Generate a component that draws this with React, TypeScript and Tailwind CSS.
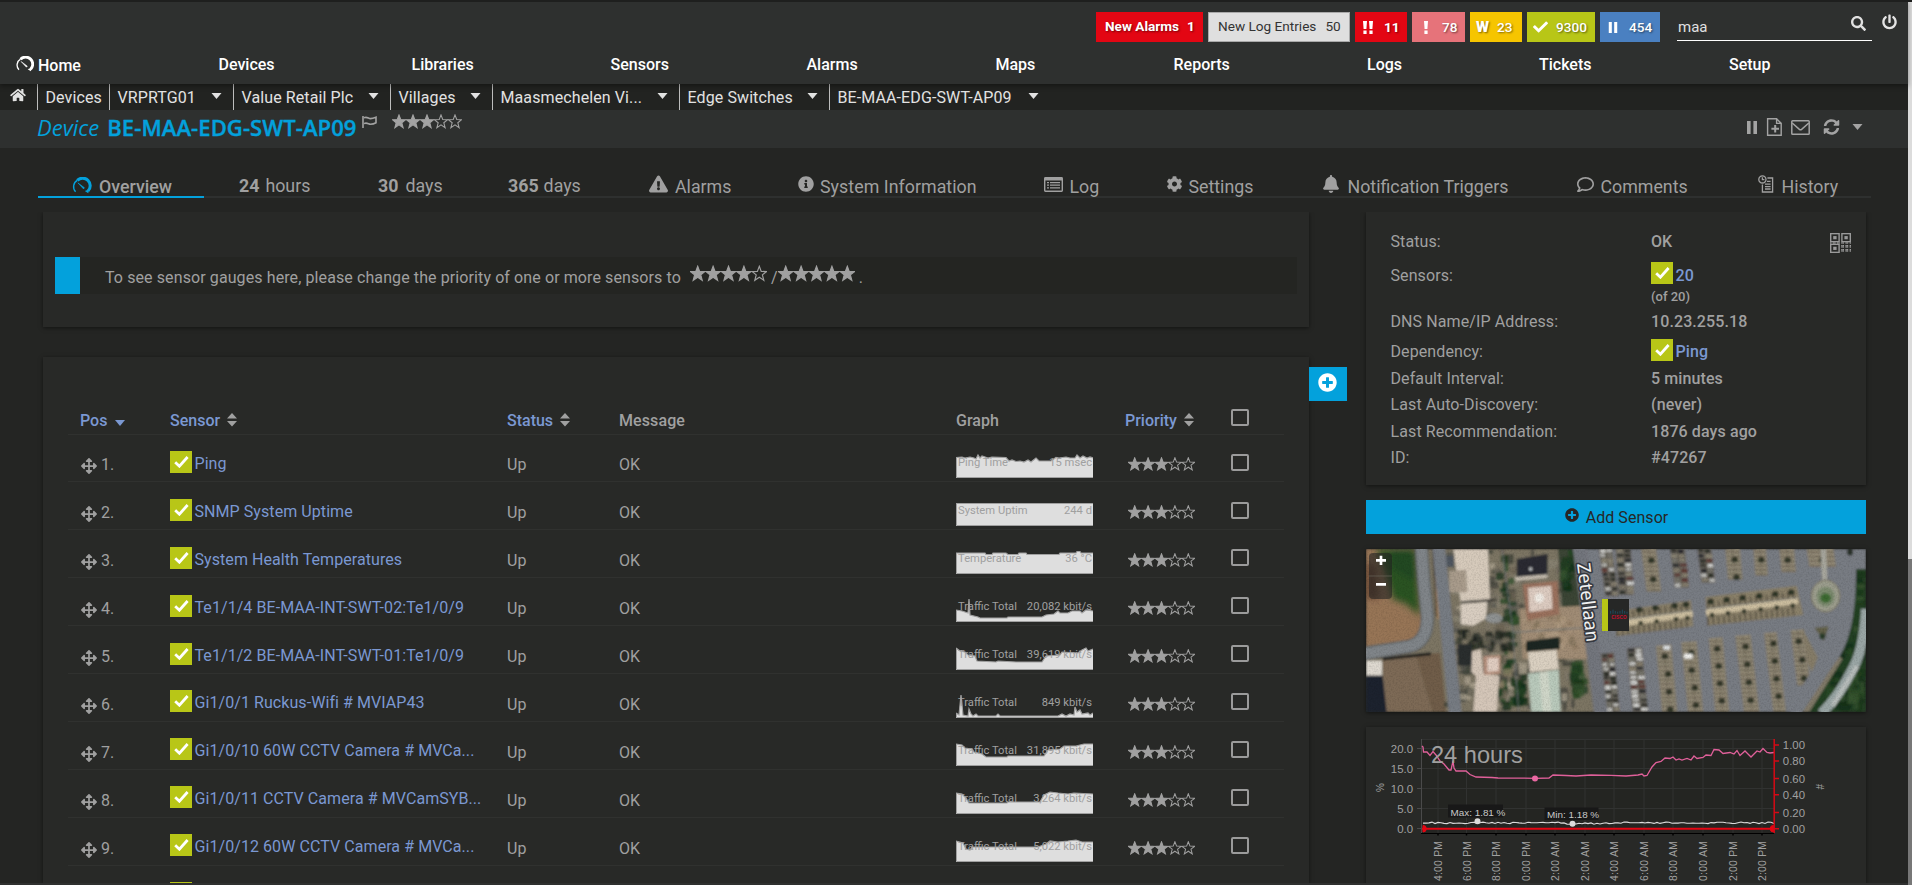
import React from "react";
import {
  FaBell,
  FaCheck,
  FaCog,
  FaExclamationTriangle,
  FaHome,
  FaInfoCircle,
  FaPlusCircle,
  FaPowerOff,
  FaRegComment,
  FaSearch,
  FaSyncAlt,
  FaArrowsAlt,
} from "react-icons/fa";

/* ---------- small drawings ---------- */

function Caret({ className }: { className?: string }) {
  return (
    <svg viewBox="0 0 10 6" className={className}>
      <path d="M0 0H10L5 6Z" fill="currentColor" />
    </svg>
  );
}

function Gauge({ className }: { className?: string }) {
  return (
    <svg viewBox="0 0 20 18" className={className}>
      <path d="M3.2 15.5A7.6 7.6 0 0 1 5 3.6" fill="none" stroke="currentColor" strokeWidth="1.5" />
      <path d="M5 3.6A7.8 7.8 0 0 1 16.4 14.8" fill="none" stroke="currentColor" strokeWidth="3.2" />
      <path d="M16.6 17.2L13 14.8L17.6 13Z" fill="currentColor" />
      <path d="M11.6 12.6L5.6 6.2L12.6 11.4Z" fill="currentColor" stroke="currentColor" strokeWidth="0.6" />
    </svg>
  );
}

const STAR = "M10 .6L12.5 7.2L19.4 7.5L14 11.8L15.9 18.8L10 14.8L4.100 18.8L6 11.8L.6 7.5L7.5 7.2Z";

function Stars({ filled, className }: { filled: number; className?: string }) {
  return (
    <svg viewBox="0 0 100 20" className={className}>
      {[0, 1, 2, 3, 4].map((i) => (
        <path
          key={i}
          d={STAR}
          transform={`translate(${i * 20} 0)`}
          fill={i < filled ? "currentColor" : "none"}
          stroke="currentColor"
          strokeWidth="1.5"
        />
      ))}
    </svg>
  );
}

function SortIcon() {
  return (
    <svg viewBox="0 0 10 14" className="mb-[3px] h-[14px] w-[10px] text-[#a0a0a0]">
      <path d="M5 0L10 5.5H0ZM0 8H10L5 13.5Z" fill="currentColor" />
    </svg>
  );
}

function Bars({ className }: { className?: string }) {
  return (
    <svg viewBox="0 0 10 13" className={className}>
      <path d="M0 0H3.6V13H0ZM6.4 0H10V13H6.4Z" fill="currentColor" />
    </svg>
  );
}

function FlagIcon({ className }: { className?: string }) {
  return (
    <svg viewBox="0 0 15 12" className={className} fill="none" stroke="currentColor" strokeWidth="1.6">
      <path d="M1 0V12" />
      <path d="M2 1.8C5 .4 6.5 2.6 8.4 2.6C10.4 2.6 12 2 14 1.2V6.8C11.8 8 10.4 8.2 8.4 8.2C6.5 8.2 5 6.2 2 7.6" />
    </svg>
  );
}

function LogIcon({ className }: { className?: string }) {
  return (
    <svg viewBox="0 0 19 15" className={className}>
      <path d="M.7 1.4V13.6Q.7 14.3 1.4 14.3H17.6Q18.3 14.3 18.3 13.6V1.4Q18.3.7 17.6.7H1.4Q.7.7.7 1.4Z" fill="none" stroke="currentColor" strokeWidth="1.4" />
      <path d="M1 1H18V3.4H1ZM3 5H5V6.2H3ZM6 5H16V6.2H6ZM3 7.6H5V8.8H3ZM6 7.6H16V8.8H6ZM3 10.2H5V11.4H3ZM6 10.2H16V11.4H6Z" fill="currentColor" />
    </svg>
  );
}

function HistoryIcon({ className }: { className?: string }) {
  return (
    <svg viewBox="0 0 16 18" className={className} fill="none" stroke="currentColor" strokeWidth="1.3">
      <circle cx="4.4" cy="4.4" r="3.6" />
      <path d="M4.4 2.2V4.6H6.4" />
      <path d="M9.4 3H14.6V17H4.4V9.6" />
      <path d="M9 6.4H12.6M7 9.2H12.6M7 11.6H12.6M7 14H12.6" />
    </svg>
  );
}

function DocPlus({ className }: { className?: string }) {
  return (
    <svg viewBox="0 0 17 18" className={className} fill="none" stroke="currentColor">
      <path d="M1.6.8H10.6L15.2 5.4V17.2H1.6ZM10.6.8V5.4H15.2" strokeWidth="1.4" />
      <path d="M9.2 7V14.6M5.4 10.8H13" strokeWidth="2" />
    </svg>
  );
}

function Mail({ className }: { className?: string }) {
  return (
    <svg viewBox="0 0 19 15" className={className} fill="none" stroke="currentColor" strokeWidth="1.5">
      <rect x=".8" y=".8" width="17.4" height="13.4" rx=".8" />
      <path d="M1.2 3L8.4 9.4Q9.5 10.3 10.6 9.4L17.8 3" />
    </svg>
  );
}

function CheckBadge({ className }: { className?: string }) {
  return (
    <span className={`flex h-[22px] w-[22px] shrink-0 items-center justify-center bg-[#b8c617] text-white ${className ?? ""}`}>
      <svg viewBox="0 0 15 12" className="h-3 w-[15px]">
        <path d="M1.2 6.2L5.4 10.2L13.6 1" fill="none" stroke="currentColor" strokeWidth="2.8" />
      </svg>
    </span>
  );
}

function QrIcon({ className }: { className?: string }) {
  const cells: React.ReactNode[] = [];
  for (let y = 0; y < 15; y++)
    for (let x = 0; x < 15; x++) {
      const finder = (x < 7 && y < 7) || (x > 7 && y < 7) || (x < 7 && y > 7);
      if (!finder && (x * 7 + y * 5 + x * y) % 3 !== 1)
        cells.push(<rect key={`${x}-${y}`} x={x} y={y} width="1" height="1" />);
    }
  return (
    <svg viewBox="0 0 15 15" preserveAspectRatio="none" className={className} fill="currentColor">
      {cells}
      {[[0, 0], [8, 0], [0, 8]].map(([x, y]) => (
        <g key={`${x}${y}`}>
          <rect x={x + 0.5} y={y + 0.5} width="6" height="6" fill="none" stroke="currentColor" />
          <rect x={x + 2.3} y={y + 2.3} width="2.4" height="2.4" />
        </g>
      ))}
    </svg>
  );
}

/* ---------- header ---------- */

const NAV: [string, string][] = [
  ["Devices", "w-[193px]"],
  ["Libraries", "w-[199px]"],
  ["Sensors", "w-[196px]"],
  ["Alarms", "w-[189px]"],
  ["Maps", "w-[178px]"],
  ["Reports", "w-[193.5px]"],
  ["Logs", "w-[172px]"],
  ["Tickets", "w-[190px]"],
  ["Setup", "w-[100px]"],
];

function Header() {
  const shadow = "[text-shadow:1px_1px_2px_rgba(0,0,0,0.5)]";
  return (
    <header className="relative z-10 h-[84px] border-t-2 border-[#1e1f1e] bg-[#2e302f] text-white shadow-[0_2px_5px_rgba(0,0,0,0.4)]">
      <div className="flex h-10 items-end justify-end gap-[5px] pr-[11px] text-[13.6px] leading-[30px]">
        <span className={`h-[30px] w-[107px] bg-[#e30613] pl-[9px] leading-[29px] font-bold ${shadow}`}>
          New Alarms<span className="ml-2">1</span>
        </span>
        <span className="h-[30px] w-[142px] border border-[#a9a9a9] bg-[#dfdfdf] pl-[9px] leading-[27px] text-[#333]">
          New Log Entries<span className="ml-[9px]">50</span>
        </span>
        <span className={`flex h-[30px] w-[52px] items-center bg-[#e30613] pl-[7px] leading-[29px] font-bold ${shadow}`}>
          <svg viewBox="0 0 12 13" className="mr-[10px] h-[13px] w-3" fill="currentColor">
            <path d="M1 0H5L4.4 8H1.6ZM1.4 9.6H4.6V13H1.4ZM7 0H11L10.4 8H7.6ZM7.4 9.6H10.6V13H7.4Z" />
          </svg>
          11
        </span>
        <span className={`flex h-[30px] w-[53px] items-center bg-[#e6737a] pl-[8px] font-medium ${shadow}`}>
          <svg viewBox="0 0 12 13" className="mr-[10px] h-[13px] w-3" fill="currentColor">
            <path d="M4 0H8L7.4 8H4.6ZM4.4 9.6H7.6V13H4.4Z" />
          </svg>
          78
        </span>
        <span className={`flex h-[30px] w-[52px] items-center bg-[#f6c500] pl-[6px] font-medium ${shadow}`}>
          <span className="mr-2 text-[15px] font-black">W</span>23
        </span>
        <span className={`flex h-[30px] w-[68px] items-center bg-[#b8c617] pl-[6px] font-medium ${shadow}`}>
          <FaCheck className="mr-[8px] h-4 w-[15px]" />
          9300
        </span>
        <span className={`flex h-[30px] w-[60px] items-center bg-[#4a80c1] pl-[8px] font-medium ${shadow}`}>
          <Bars className="mr-[11px] h-[11px] w-[10px]" />
          454
        </span>
        <label className="mb-[1px] ml-3 flex h-[30px] w-[195px] items-center justify-between border-b border-white pt-[2px] pr-[6px] pl-px text-[15px] text-[#e0e0e0]">
          maa
          <FaSearch className="mb-[6px] h-[15px] w-[15px]" />
        </label>
        <FaPowerOff className="mb-[12px] ml-[5px] h-4 w-[15px] text-[#e4e4e4]" />
      </div>
      <nav className="flex h-[44px] items-center pt-[2px] pl-[16px] text-[16px] font-medium">
        <span className="flex w-[202.5px] items-center pt-px">
          <Gauge className="mr-1 mb-1 h-4 w-[18px]" />
          Home
        </span>
        {NAV.map(([t, w]) => (
          <span key={t} className={`shrink-0 ${w}`}>{t}</span>
        ))}
      </nav>
    </header>
  );
}

const CRUMBS: [string, string, boolean][] = [
  ["Devices", "w-[72px]", false],
  ["VRPRTG01", "w-[124px]", true],
  ["Value Retail Plc", "w-[157px]", true],
  ["Villages", "w-[102px]", true],
  ["Maasmechelen Vi...", "w-[187px]", true],
  ["Edge Switches", "w-[150px]", true],
  ["BE-MAA-EDG-SWT-AP09", "w-[221px]", true],
];

function Breadcrumbs() {
  return (
    <div className="flex h-[26px] bg-[#222321] text-[16px] text-[#e2e2e2]">
      <div className="w-[37px] pt-[4px] pl-[10px]">
        <FaHome className="h-[14px] w-4" />
      </div>
      {CRUMBS.map(([t, w, caret]) => (
        <div key={t} className={`flex justify-between border-l border-[#bdbdbd] pt-[4px] pr-[11px] pl-[7.500px] leading-[20px] ${w}`}>
          <span className="tracking-[0.1px] whitespace-nowrap">{t}</span>
          {caret && <Caret className="mt-[5px] h-[6px] w-[11px]" />}
        </div>
      ))}
    </div>
  );
}

function TitleBar() {
  return (
    <div className="flex h-[38px] items-start bg-[#2e302f] pr-[45px] pl-[38px] text-[#a3a3a3]">
      <h1 className="pt-[2px] font-['Open_Sans'] text-[22px] leading-[30px] whitespace-nowrap text-[#03a1dc]">
        <span className="mr-2 -ml-px italic">Device</span>
        <span className="font-semibold tracking-[0.1px] [-webkit-text-stroke:0.4px_#03a1dc]">BE-MAA-EDG-SWT-AP09</span>
      </h1>
      <FlagIcon className="mt-[6px] ml-[5px] h-3 w-[15px]" />
      <Stars filled={3} className="mt-[4px] ml-[15px] h-[15px] w-[70px]" />
      <div className="ml-auto flex h-[34px] items-center">
        <Bars className="h-[13px] w-[10px]" />
        <DocPlus className="ml-[9px] h-[18px] w-[17px]" />
        <Mail className="ml-[8px] h-[15px] w-[19px]" />
        <FaSyncAlt className="ml-[13px] h-4 w-[17px]" />
        <Caret className="ml-[12px] h-[6px] w-[11px]" />
      </div>
    </div>
  );
}

function Tabs() {
  const item = "flex shrink-0 items-center whitespace-nowrap";
  return (
    <nav className="mx-[38px] mt-[28px] mr-[37px] flex h-[22px] border-b-2 border-[#2e302f] text-[17.8px] leading-[22px] text-[#a0a0a0]">
      <div className={`${item} h-[22px] w-[166px] border-b-2 border-[#03a1dc] pt-[1px] pl-[34px] font-medium`}>
        <Gauge className="mr-[7px] mb-[3px] h-[17px] w-5 text-[#03a1dc]" />
        Overview
      </div>
      <div className={`${item} w-[139.5px] pl-[35px]`}><b className="mr-[6px]">24</b> hours</div>
      <div className={`${item} w-[129.5px] pl-[34.5px]`}><b className="mr-[7px]">30</b> days</div>
      <div className={`${item} w-[138px] pl-[35px]`}><b className="mr-[5px]">365</b> days</div>
      <div className={`${item} w-[149px] pt-[2px] pl-[38px]`}>
        <FaExclamationTriangle className="mr-[7px] mb-[6px] h-[18px] w-[19px]" />Alarms
      </div>
      <div className={`${item} w-[283.5px] pt-[2px] pl-[38px]`}>
        <FaInfoCircle className="mr-[6px] mb-[6px] h-4 w-4" />
        <span className="tracking-[0.05px]">System Information</span>
      </div>
      <div className={`${item} w-[122px] pt-[2px]`}>
        <LogIcon className="mr-[7px] mb-[6px] h-[15px] w-[19px]" />Log
      </div>
      <div className={`${item} w-[156px] pt-[2px]`}>
        <FaCog className="mr-[6px] mb-[6px] h-4 w-[17px]" />Settings
      </div>
      <div className={`${item} w-[254px] pt-[2px]`}>
        <FaBell className="mr-[8px] mb-[6px] h-[18px] w-[18px]" />
        <span>Notification Triggers</span>
      </div>
      <div className={`${item} w-[182px] pt-[2px]`}>
        <FaRegComment className="mr-[6px] mb-[5px] h-[17px] w-[19px]" />Comments
      </div>
      <div className={`${item} pt-[2px]`}>
        <HistoryIcon className="mr-2 mb-[6px] h-[18px] w-4" />History
      </div>
    </nav>
  );
}

/* ---------- sensor table ---------- */

type Sensor = { name: string; label: string; value: string; line: string };

const SENSORS: Sensor[] = [
  { name: "Ping", label: "Ping Time", value: "15 msec", line: "0,5.500 6,5 9,6 14,5 18,6 20,7 22,3 24,6 26,4 32,6 36,5 50,5.500 53,9 56,8 60,9.500 64,9 68,10 72,8 75,10 80,6 83,9 86,9 95,9 100,5.500 103,6 110,5 114,6 119,6 121,3 124,6 127,4 131,6 134,5 137,6" },
  { name: "SNMP System Uptime", label: "System Uptim", value: "244 d", line: "0,3.500 137,3.500" },
  { name: "System Health Temperatures", label: "Temperature", value: "36 °C", line: "0,5 29,5 30,6.500 36,6.500 37,5 50,5 52,6.500 62,6.500 63,5 70,5 71,6.500 103,6.500 104,5 120,5 121,3.500 124,3.500 125,5 137,5" },
  { name: "Te1/1/4 BE-MAA-INT-SWT-02:Te1/0/9", label: "Traffic Total", value: "20,082 kbit/s", line: "0,14 6,15 12,17 13,3 14,19 22,21 24,22 51,22 52,21 86,21 90,19 98,18 102,15 104,17 112,17 116,15 124,15 126,17 130,14 137,15" },
  { name: "Te1/1/2 BE-MAA-INT-SWT-01:Te1/0/9", label: "Traffic Total", value: "39,619 kbit/s", line: "0,4 4,7 9,8 12,11 19,12 21,17 40,18 42,17 60,18 86,18 90,12 104,11 106,8 122,9 126,6 130,4 132,7 137,5" },
  { name: "Gi1/0/1 Ruckus-Wifi # MVIAP43", label: "Traffic Total", value: "849 kbit/s", line: "0,21 3,23 5,3 7,23 12,24 13,17 15,22 17,24 20,22 22,24 40,24 42,22 44,24 102,24 106,22 110,24 114,22 118,23 119,15 121,20 124,18 126,22 132,21 134,23 137,21" },
  { name: "Gi1/0/10 60W CCTV Camera # MVCa...", label: "Traffic Total", value: "31,895 kbit/s", line: "0,4 6,5 9,8 16,9 18,12 26,14 30,17 51,17 52,16 88,16 92,10 104,9 108,6 120,6 128,4 137,4" },
  { name: "Gi1/0/11 CCTV Camera # MVCamSYB...", label: "Traffic Total", value: "3,264 kbit/s", line: "0,5 6,6 10,10 13,15 51,15 52,14 84,14 88,7 94,4 102,5 112,6 118,5 137,6" },
  { name: "Gi1/0/12 60W CCTV Camera # MVCa...", label: "Traffic Total", value: "5,022 kbit/s", line: "0,5 7,7 10,13 14,14 16,11 82,11 90,8 94,5 102,6 112,5 120,4 126,6 137,6" },
];

const COLS = "grid grid-cols-[102px_337px_112px_337px_170px_105px_52px]";

function Sparkline({ s }: { s: Sensor }) {
  return (
    <svg viewBox="0 0 137 26" className="mb-[3px] h-[26px] w-[137px] overflow-hidden font-['Roboto']">
      <polygon points={`0,26 ${s.line} 137,26`} fill="#dedede" />
      <polyline points={s.line} fill="none" stroke="#a0a0a0" strokeWidth="1.2" />
      <path d={`M.5 ${s.line.split(" ")[0].split(",")[1]}V25.5H137`} fill="none" stroke="#a0a0a0" strokeWidth="1" />
      <text x="2" y="14" fontSize="11.2" fill="#a0a0a0">{s.label}</text>
      <text x="136" y="14" fontSize="11.2" textAnchor="end" fill="#a0a0a0">{s.value}</text>
    </svg>
  );
}

function Checkbox({ className }: { className?: string }) {
  return <span className={`block h-[17px] w-[18px] rounded-[2px] border-2 border-[#9b9b9b] ${className ?? ""}`} />;
}

function SensorTable() {
  return (
    <section className="mt-[30px] h-[526px] bg-[#282927] px-[25px] pt-[30px] shadow-[0_1px_4px_rgba(0,0,0,0.5)]">
      <div className={`${COLS} h-[48px] items-end border-b border-[#30312f] text-[16px] leading-5 font-medium text-[#7b98d2]`}>
        <span className="mb-[3px] flex items-center gap-2 pl-3">Pos<Caret className="mt-1 h-[6px] w-[10px]" /></span>
        <span className="mb-[3px] flex items-center gap-[7px]">Sensor<SortIcon /></span>
        <span className="mb-[3px] flex items-center gap-[7px]">Status<SortIcon /></span>
        <span className="mb-[3px] tracking-[0.1px] text-[#a0a0a0]">Message</span>
        <span className="mb-[3px] text-[#a0a0a0]">Graph</span>
        <span className="mb-[3px] flex items-center gap-[7px]"><span className="-ml-px">Priority</span><SortIcon /></span>
        <Checkbox className="mb-[8px]" />
      </div>
      {SENSORS.map((s, i) => (
        <div key={s.name} className={`${COLS} ${i === 0 ? "h-[47px]" : "h-[48px]"} items-end border-b border-[#30312f] text-[16px] leading-5 text-[#a0a0a0]`}>
          <span className="mb-[6px] flex items-end pl-[13px]">
            <FaArrowsAlt className="mr-1 mb-px h-4 w-4" />{i + 1}.
          </span>
          <span className={`flex items-end text-[#7b98d2] ${i > 4 ? "mb-[9px]" : "mb-[8px]"}`}>
            <CheckBadge />
            <span className="mb-[-1px] ml-[2.5px] tracking-[0.07px] whitespace-nowrap">{s.name}</span>
          </span>
          <span className="mb-[6px]">Up</span>
          <span className="mb-[6px]">OK</span>
          <Sparkline s={s} />
          <Stars filled={3} className="mb-[10px] ml-[2px] h-[14px] w-[67px]" />
          <Checkbox className={i > 1 ? "mb-[11px]" : "mb-[10px]"} />
        </div>
      ))}
      <div className="pt-[16px] pl-[102px]"><CheckBadge /></div>
    </section>
  );
}

function GaugeHint() {
  return (
    <section className="h-[115px] bg-[#282927] px-3 pt-[45px] shadow-[0_1px_4px_rgba(0,0,0,0.5)]">
      <div className="flex h-[37px] border-l-[25px] border-[#03a1dc] bg-[#242522] pl-[25px] text-[16px] leading-5 text-[#a0a0a0]">
        <p className="flex pt-[11px] tracking-[0.1px]">
          To see sensor gauges here, please change the priority of one or more sensors to
          <Stars filled={4} className="-mt-[3px] ml-[9px] h-[17px] w-[77px]" />
          <span className="ml-[4px]">/</span>
          <Stars filled={5} className="-mt-[3px] h-[17px] w-[77px]" />
          <span className="ml-[4px]">.</span>
        </p>
      </div>
    </section>
  );
}

/* ---------- side column ---------- */

function Row({ label, h, children }: { label: string; h: string; children: React.ReactNode }) {
  return (
    <div className={`flex items-end text-[16px] leading-5 ${h}`}>
      <span className="-ml-[0.5px] w-[260.5px] tracking-[0.1px]">{label}</span>
      <span className="flex items-end font-medium tracking-[0.1px]">{children}</span>
    </div>
  );
}

function DeviceInfo() {
  return (
    <section className="relative h-[273px] bg-[#282927] pt-[12px] pl-[25px] text-[#a0a0a0] shadow-[0_1px_4px_rgba(0,0,0,0.5)]">
      <Row label="Status:" h="h-[28px]">OK</Row>
      <Row label="Sensors:" h="h-[34px]">
        <CheckBadge className="mb-[2px]" /><span className="ml-[2.5px] text-[#7b98d2]">20</span>
      </Row>
      <div className="flex h-[20px] items-end pl-[260px] text-[13px] leading-[18px] font-medium">(of 20)</div>
      <Row label="DNS Name/IP Address:" h="h-[26px]">10.23.255.18</Row>
      <Row label="Dependency:" h="h-[30px]">
        <CheckBadge className="mb-px" /><span className="ml-[2.5px] text-[#7b98d2]">Ping</span>
      </Row>
      <Row label="Default Interval:" h="h-[27px]">5 minutes</Row>
      <Row label="Last Auto-Discovery:" h="h-[26px]">(never)</Row>
      <Row label="Last Recommendation:" h="h-[27px]">1876 days ago</Row>
      <Row label="ID:" h="h-[26px]">#47267</Row>
      <QrIcon className="absolute top-[21px] right-[15px] h-[20px] w-[21px] text-[#9a9a9a]" />
    </section>
  );
}

/* deterministic noise so that the aerial drawing is the same on each render */
function noise(n: number) {
  const v = Math.sin(n * 127.1 + 11.7) * 43758.5453;
  return v - Math.floor(v);
}

type Patch = { x: number; y: number; w: number; h: number; n: number; colors: string[]; min: number; max: number; seed: number };

function Scatter({ x, y, w, h, n, colors, min, max, seed }: Patch) {
  return (
    <g>
      {Array.from({ length: n }, (_, i) => {
        const a = seed * 1000 + i * 5;
        const rw = min + noise(a) * (max - min);
        const rh = min + noise(a + 1) * (max - min);
        return (
          <rect
            key={i}
            x={x + noise(a + 2) * (w - rw)}
            y={y + noise(a + 3) * (h - rh)}
            width={rw}
            height={rh}
            rx={min / 3}
            fill={colors[Math.floor(noise(a + 4) * colors.length)]}
            opacity={0.75}
          />
        );
      })}
    </g>
  );
}

/* one parking strip: a leaning quadrilateral, split in bays, with parked cars or trees */
function Bay({ x0, y0, x1, y1, w, cars, seed }: { x0: number; y0: number; x1: number; y1: number; w: number; cars: boolean; seed: number }) {
  const rows = Math.floor((y1 - y0) / 13);
  return (
    <g>
      <polygon points={`${x0},${y0} ${x0 + w},${y0 - 4} ${x1 + w},${y1} ${x1},${y1}`} fill={cars ? "#6a665e" : "#877f6c"} />
      {Array.from({ length: rows }, (_, i) => {
        const t = i / rows;
        const x = x0 + (x1 - x0) * t;
        const y = y0 + (y1 - y0) * t;
        return (
          <g key={i}>
            {!cars && <path d={`M${x} ${y + 3}H${x + w}`} stroke="#a79f8b" strokeWidth="2.5" />}
            {!cars && <path d={`M${x} ${y + 9}H${x + w}`} stroke="#675f50" strokeWidth="2.5" />}
            {!cars && i % 4 === 2 && (
              <ellipse cx={x + w / 2 + noise(seed + i) * 6} cy={y + 6} rx="10" ry="9" fill="#2a3023" />
            )}
            {cars &&
              [0, 1].map((k) => (
                <rect
                  key={k}
                  x={x + 1 + k * (w / 2) + noise(seed * 7 + i + k) * 4}
                  y={y + 1}
                  width={w / 2 - 6 + noise(seed * 3 + i * 2 + k) * 5}
                  height={7 + noise(seed * 5 + i + k * 9) * 6}
                  rx="3"
                  fill={["#b9b9b6", "#26282c", "#34352f", "#857e6d", "#5f3a36", "#d0d0ce", "#2a2d26", "#75736a", "#8a8473"][Math.floor(noise(seed * 31 + i * 2 + k) * 9)]}
                />
              ))}
          </g>
        );
      })}
      <path d={`M${x0 + w / 2} ${y0}L${x1 + w / 2} ${y1}`} stroke="#5c5749" strokeWidth="1.5" />
    </g>
  );
}

function AerialMap() {
  const greens = ["#1d3a1c", "#2a4a26", "#16301a", "#36532f", "#223f24"];
  const grays = ["#55564f", "#8a8474", "#45463d", "#b0a793", "#6f6a5c", "#3d4138", "#7e7768"];
  return (
    <div className="relative mt-[15px] h-[163px] overflow-hidden shadow-[0_1px_4px_rgba(0,0,0,0.5)]">
      <svg viewBox="0 0 1500 489" preserveAspectRatio="none" className="block h-full w-full">
        <defs>
          <filter id="soft" x="0" y="0" width="1" height="1"><feGaussianBlur stdDeviation="2.6" /></filter>
          <filter id="blur" x="-0.2" y="-0.2" width="1.4" height="1.4"><feGaussianBlur stdDeviation="10" /></filter>
          <filter id="grain" x="0" y="0" width="1" height="1">
            <feTurbulence type="fractalNoise" baseFrequency="0.2" numOctaves="2" seed="4" />
            <feColorMatrix values="0 0 0 0 0  0 0 0 0 0  0 0 0 0 0  1.4 0 0 0 -0.55" />
          </filter>
        </defs>
        <g filter="url(#soft)">
          <rect width="1500" height="489" fill="#7b7463" />
          {/* field, west side */}
          <path d="M0 0H155L165 200Q165 260 130 272L0 290Z" fill="#977557" />
          <g filter="url(#blur)">
            <path d="M30 0H150L162 200L120 165L80 150L60 80Z" fill="#2a5224" />
            <path d="M70 0H150V100L80 60Z" fill="#234a20" />
            <path d="M0 40L30 50L40 150L0 150Z" fill="#6d4c34" />
          </g>
          <path d="M48 328L220 312L240 489H60Z" fill="#7d6b56" />
          <path d="M150 318L222 312L240 489H200Z" fill="#6f5d48" />
          <path d="M0 335H48V380H0Z" fill="#ded9d0" />
          <path d="M0 380H50L62 489H0Z" fill="#1f212d" />
          <path d="M50 330L195 314" stroke="#1e1f1c" strokeWidth="9" />
          {/* built-up blocks */}
          <Scatter x={232} y={0} w={420} h={489} n={210} colors={grays} min={10} max={34} seed={1} />
          <Scatter x={380} y={0} w={80} h={489} n={46} colors={greens.concat("#6f6656", "#8d8168")} min={12} max={30} seed={2} />
          <path d="M576 0H640L655 190L590 200Z" fill="#3a4536" />
          <Scatter x={578} y={0} w={66} h={130} n={26} colors={greens} min={12} max={30} seed={3} />
          <path d="M460 180L650 170L670 330L470 330Z" fill="#a08c74" />
          <Scatter x={470} y={190} w={180} h={120} n={46} colors={["#a8937a", "#8e7a62", "#b39f86", "#85755f"]} min={10} max={24} seed={4} />
          <path d="M262 0H366L372 152L284 160Z" fill="#d6cabb" />
          <path d="M284 164L364 158L360 208L322 230L284 226Z" fill="#d8cdc0" />
          <path d="M286 160L392 152" stroke="#2f2e2a" strokeWidth="6" />
          <path d="M240 20H264V54H240Z" fill="#50565f" />
          <path d="M250 66L300 62L304 130H250Z" fill="#a89b8b" />
          <ellipse cx="384" cy="208" rx="26" ry="15" fill="#8e9191" />
          <path d="M452 30L545 14V84L452 88Z" fill="#2a2c31" />
          <path d="M448 84L545 76V86L448 96Z" fill="#c6bdb0" />
          <path d="M470 106L575 96L580 196L484 214Z" fill="#9a715d" />
          <path d="M486 116L556 110L560 180L490 190Z" fill="#dccbc0" />
          <circle cx="520" cy="147" r="14" fill="#f0ebe4" />
          <circle cx="494" cy="60" r="5" fill="#cfd2d4" />
          <Scatter x={270} y={240} w={180} h={70} n={40} colors={["#1d241e", "#2d332b", "#5c5a50", "#232a22", "#77705f"]} min={14} max={30} seed={5} />
          <path d="M275 285H318V350H275Z" fill="#2b2d2f" />
          <path d="M318 308L345 300L352 372L400 380L392 489H322L330 380L316 370Z" fill="#d4c6b8" />
          <path d="M352 322L404 318L402 374L354 378Z" fill="#b58f7c" />
          <path d="M364 328L398 326L398 366L364 368Z" fill="#e0cdc1" />
          <path d="M480 276L580 264L582 300L480 308Z" fill="#1c2622" />
          <path d="M486 310L572 302L578 360L492 370Z" fill="#dad0c1" />
          <path d="M486 374L578 362L584 489H496Z" fill="#b9c9bb" />
          <path d="M520 370L546 368L556 489H530Z" fill="#cfd6c8" />
          <Scatter x={610} y={320} w={58} h={130} n={34} colors={greens} min={14} max={32} seed={6} />
          <Scatter x={438} y={370} w={50} h={110} n={26} colors={greens} min={12} max={28} seed={7} />
          <Scatter x={424} y={180} w={40} h={50} n={12} colors={greens} min={12} max={26} seed={8} />
          <path d="M408 0L440 240L458 489" fill="none" stroke="#6a6f72" strokeWidth="3" />
          <path d="M440 250L660 236" stroke="#777a78" strokeWidth="4" />
          {/* west roads */}
          <path d="M166 -5Q172 100 184 200Q186 280 130 292L-5 314" fill="none" stroke="#5e6264" strokeWidth="40" />
          <path d="M166 -5Q172 100 184 200Q186 280 130 292L-5 314" fill="none" stroke="#808589" strokeWidth="32" />
          <path d="M206 0L216 210" stroke="#b48c62" strokeWidth="5" />
          <path d="M200 0L212 205" stroke="#3c3429" strokeWidth="4" />
          <path d="M218 -5L268 494" fill="none" stroke="#777c83" strokeWidth="38" />
          {/* car park base */}
          <path d="M624 0H1500V489H684Z" fill="#787b83" />
          <Bay x0={698} y0={0} x1={718} y1={142} w={40} cars seed={11} />
          <Bay x0={748} y0={0} x1={758} y1={138} w={46} cars seed={12} />
          <Bay x0={826} y0={0} x1={842} y1={128} w={44} cars={false} seed={13} />
          <Bay x0={912} y0={0} x1={926} y1={116} w={44} cars seed={14} />
          <Bay x0={994} y0={0} x1={1006} y1={102} w={42} cars seed={15} />
          <Bay x0={1078} y0={0} x1={1086} y1={92} w={44} cars={false} seed={16} />
          <Bay x0={1162} y0={0} x1={1168} y1={80} w={38} cars={false} seed={17} />
          <Bay x0={1240} y0={0} x1={1246} y1={70} w={44} cars={false} seed={18} />
          <Bay x0={1322} y0={0} x1={1330} y1={54} w={80} cars={false} seed={19} />
          {/* planted rows in the middle */}
          <path d="M750 186L975 154L982 232L750 262Z" fill="#8a8069" />
          <path d="M1018 144L1292 110L1312 198L1024 230Z" fill="#8a8069" />
          <path d="M750 226L980 194M1020 190L1296 156" stroke="#cdbfa0" strokeWidth="17" />
          <path d="M750 216L980 184M1020 180L1296 146" stroke="#8b8c88" strokeWidth="3" />
          {Array.from({ length: 34 }, (_, i) => {
            const x = 755 + i * 16;
            if (x > 972 && x < 1024) return null;
            const y = 262 - (x - 750) * 0.117;
            return <path key={i} d={`M${x} ${y}l-2 -24M${x} ${y - 52}l-2 -20`} stroke="#4b463a" strokeWidth="4" />;
          })}
          {[770, 820, 868, 926, 960, 1034, 1082, 1130, 1180, 1228, 1276].map((x) => (
            <g key={x} fill="#2f3425">
              <ellipse cx={x} cy={188 - (x - 770) * 0.115} rx="10" ry="9" />
              <ellipse cx={x + 4} cy={228 - (x - 770) * 0.115} rx="7" ry="7" />
            </g>
          ))}
          <Bay x0={704} y0={314} x1={722} y1={489} w={40} cars seed={21} />
          <Bay x0={782} y0={298} x1={800} y1={489} w={46} cars seed={22} />
          <Bay x0={870} y0={290} x1={888} y1={489} w={46} cars={false} seed={23} />
          <Bay x0={946} y0={280} x1={966} y1={489} w={46} cars={false} seed={24} />
          <Bay x0={1028} y0={268} x1={1048} y1={489} w={42} cars={false} seed={25} />
          <Bay x0={1108} y0={260} x1={1134} y1={489} w={46} cars={false} seed={26} />
          <Bay x0={1194} y0={252} x1={1222} y1={489} w={38} cars={false} seed={27} />
          <Bay x0={1274} y0={244} x1={1294} y1={410} w={40} cars={false} seed={28} />
          <path d="M1310 240L1355 325L1338 372L1325 340Z" fill="#857b68" />
          <rect x="954" y="314" width="26" height="15" fill="#f1f1ee" />
          <rect x="892" y="290" width="20" height="12" fill="#dfe3e6" />
          {/* east edge: green belt with a path */}
          <path d="M1468 60H1500V489H1300L1390 340L1420 260Z" fill="#243f24" />
          <Scatter x={1470} y={70} w={30} h={100} n={18} colors={greens} min={12} max={30} seed={31} />
          <Scatter x={1415} y={230} w={85} h={110} n={46} colors={greens} min={12} max={32} seed={32} />
          <Scatter x={1370} y={360} w={130} h={129} n={70} colors={greens} min={12} max={34} seed={33} />
          <path d="M1390 300L1430 330L1330 489H1290Z" fill="#807967" />
          <path d="M1448 60Q1450 260 1388 330L1280 494" fill="none" stroke="#787b83" strokeWidth="44" />
          <path d="M1500 180Q1494 300 1460 360Q1420 440 1366 494" fill="none" stroke="#99a5a4" strokeWidth="30" />
          <path d="M1474 350L1400 470" stroke="#b8bdbb" strokeWidth="14" />
          <path d="M1345 236L1388 232L1374 276Z" fill="#62604a" />
          <ellipse cx="1369" cy="262" rx="9" ry="10" fill="#2c3c2a" />
          <ellipse cx="1380" cy="142" rx="60" ry="62" fill="#787b83" />
          <ellipse cx="1379" cy="141" rx="43" ry="48" fill="#9b9d8d" stroke="#77705a" strokeWidth="3" />
          <ellipse cx="1379" cy="143" rx="27" ry="30" fill="#7c8a6e" />
          <ellipse cx="1379" cy="147" rx="16" ry="14" fill="#3d6a33" />
          <path d="M1372 0L1376 92" stroke="#a8a79e" strokeWidth="16" />
          <ellipse cx="1452" cy="8" rx="9" ry="12" fill="#2a322a" />
          {/* Zetellaan */}
          <path d="M640 -5L705 494" fill="none" stroke="#73767d" strokeWidth="40" />
        </g>
        <rect width="1500" height="489" filter="url(#grain)" opacity="0.16" />
        <g transform="translate(633 44) rotate(83)" fontFamily="Noto Sans, sans-serif" fontSize="55">
          <text textLength="238" stroke="#36393f" strokeWidth="10" strokeLinejoin="round" fill="#36393f">Zetellaan</text>
          <text textLength="238" fill="#f1f1f1">Zetellaan</text>
        </g>
        <g>
          <rect x="9" y="12" width="69" height="138" rx="12" fill="#222" opacity="0.6" />
          <path d="M9 81H78" stroke="#6b675a" strokeWidth="2" />
          <path d="M30 34H60M45 20V48M30 106H60" stroke="#fff" strokeWidth="8" />
        </g>
        <rect x="708" y="150" width="81" height="96" fill="#262726" />
        <rect x="708" y="150" width="18" height="96" fill="#b8c617" />
        <path d="M734 186V194M741 182V194M748 186V194M755 188V194M762 186V194M769 182V194M776 186V194M783 188V194" stroke="#1d4a5c" strokeWidth="3" />
        <text x="736" y="210" fontFamily="Liberation Sans, sans-serif" fontWeight="bold" fontSize="14" textLength="46" fill="#c8102e">CISCO</text>
      </svg>
    </div>
  );
}

const HOURS = ["4:00 PM", "6:00 PM", "8:00 PM", "0:00 PM", "2:00 AM", "2:00 AM", "4:00 AM", "6:00 AM", "8:00 AM", "0:00 AM", "2:00 PM", "2:00 PM"];
const HOUR_X = [72, 100.5, 130, 160, 189, 219, 248, 278, 307, 337, 367, 396];
const TRAFFIC =
  "56,19 57,20 57.5,25 61,25 64,28.5 67,24.500 70,28 74,34 78,37 83,43 85,43 87,34 88,41 90,44 100,44 104,47.500 110,50 126,50.500 132,51 170,51.300 183,51 187,48 200,48.500 210,49 225,48 245,48.300 260,49 272,48 276,47 278,49 281,48.500 286,40 290,35.500 295,34.500 299,31 304,31.500 307,30 310,33 313,32 316,33 321,31.500 325,33 328,29 331,31.500 337,30.500 340,28 345,28.500 348,22.500 353,23 357,26.500 364,25.500 368,27 371,23.500 374,28.500 379,24 382,27 385,30 388,27 391,24 394,25 397,21.500 401,25.500 404,26 408,25.500";

function DayChart() {
  const grid = "#313231";
  const white = Array.from({ length: 118 }, (_, i) => `${57 + i * 3},${(95 + noise(i) * 1.6 + (i > 45 && i < 66 ? 0.7 : 0)).toFixed(1)}`).join(" ");
  const left: [string, number][] = [["20.0", 26], ["15.0", 45.7], ["10.0", 65.7], ["5.0", 85.7], ["0.0", 105.7]];
  const right: [string, number][] = [["1.00", 21.7], ["0.80", 37.7], ["0.60", 56], ["0.40", 72], ["0.20", 89.7], ["0.00", 105.7]];
  return (
    <div className="mt-[15px] h-[160px] overflow-hidden bg-[#282927] shadow-[0_1px_4px_rgba(0,0,0,0.5)]">
      <svg viewBox="0 0 500 156" className="block h-[156px] w-[500px]" fontFamily="Liberation Sans, Arial, sans-serif" fill="#a0a0a0">
        <rect x="56" y="12" width="352" height="94" fill="#242522" />
        <path d="M56 12.5H408M56 21.5H408M56 41.5H408M56 61.5H408M56 81.5H408" stroke={grid} />
        {HOUR_X.map((x) => (
          <path key={x} d={`M${x} 12V106`} stroke={grid} />
        ))}
        <path d="M55.5 12V106M51 21.5H56M51 41.5H56M51 61.5H56M51 81.5H56M51 101.5H56" stroke="#4a4a4a" />
        <path d="M55 106.5H408" stroke="#000" />
        {HOUR_X.map((x) => (
          <path key={x} d={`M${x} 106V108.500`} stroke="#000" strokeWidth="1.5" />
        ))}
        <polyline points={TRAFFIC} fill="none" stroke="#e0609a" strokeWidth="1.3" />
        <circle cx="169" cy="51.5" r="3" fill="#ea68a2" />
        <polyline points={white} fill="none" stroke="#dcdcdc" strokeWidth="1.1" />
        <path d="M56 101.7H408" stroke="#e30613" strokeWidth="2" />
        <path d="M57 98.4A3.3 3.3 0 0 1 57 105ZM407.5 98.4A3.3 3.3 0 0 0 407.5 105Z" fill="#e30613" strokeWidth="1" stroke="#e30613" />
        <path d="M408.2 12V106M408 18H413M408 34H413M408 51.5H413M408 67.7H413M408 85.5H413M408 101.7H413" fill="none" stroke="#d40a16" strokeWidth="1.5" />
        <g fontSize="11.4" textAnchor="end">
          {left.map(([t, y]) => (
            <text key={t} x="47" y={y}>{t}</text>
          ))}
          {right.map(([t, y]) => (
            <text key={t} x="439" y={y}>{t}</text>
          ))}
        </g>
        <text x="65" y="35.7" fontSize="23.6">24 hours</text>
        <rect x="82" y="77.5" width="55" height="13" fill="#181818" />
        <rect x="178.500" y="80.5" width="54" height="12.5" fill="#181818" />
        <g fontSize="9.9" fill="#c9c9c9">
          <text x="84.5" y="89">Max: 1.81 %</text>
          <text x="181" y="91">Min: 1.18 %</text>
        </g>
        <circle cx="111.5" cy="94.3" r="3" fill="#dcdcdc" />
        <circle cx="206.5" cy="96.7" r="3" fill="#dcdcdc" />
        <g fontSize="10.4">
          {HOURS.map((t, i) => (
            <text key={i} transform={`translate(${HOUR_X[i] + 4} 154) rotate(-90)`} textLength="40">{t}</text>
          ))}
          <text fontSize="10" transform="translate(18 65) rotate(-90)">%</text>
          <text fontSize="10" transform="translate(458 62.500) rotate(-90)">#</text>
        </g>
      </svg>
    </div>
  );
}

export default function App() {
  return (
    <div className="flex h-[885px] w-[1912px] overflow-hidden bg-[#242523] font-['Roboto','Liberation_Sans',sans-serif]">
      <div className="relative flex w-[1908px] flex-col">
        <Header />
        <Breadcrumbs />
        <TitleBar />
        <Tabs />
        <main className="mt-[14px] flex h-[671px] items-start overflow-hidden pl-[43px]">
          <div className="w-[1266px]">
            <GaugeHint />
            <SensorTable />
          </div>
          <button className="mt-[155px] flex h-[34px] w-[38px] items-center justify-center bg-[#03a1dc] pr-[2px] text-white">
            <FaPlusCircle className="mb-[3px] h-[19px] w-[19px]" />
          </button>
          <aside className="ml-[19px] w-[500px]">
            <DeviceInfo />
            <button className="mt-[15px] flex h-[34px] w-full items-center justify-center gap-[7px] bg-[#03a1dc] pl-px text-[16px] text-[#262726]">
              <FaPlusCircle className="mb-[5px] h-[14px] w-[14px]" />
              <span className="pt-[2px] tracking-[0.05px]">Add Sensor</span>
            </button>
            <AerialMap />
            <DayChart />
          </aside>
        </main>
        <div className="h-[2px] bg-[#2f302f]" />
      </div>
      <div className="flex w-1 flex-col">
        <div className="h-[2px] bg-[#1e1f1e]" />
        <div className="h-[557px] bg-[#dcdcdc]" />
        <div className="flex-1 bg-[#777]" />
      </div>
    </div>
  );
}
